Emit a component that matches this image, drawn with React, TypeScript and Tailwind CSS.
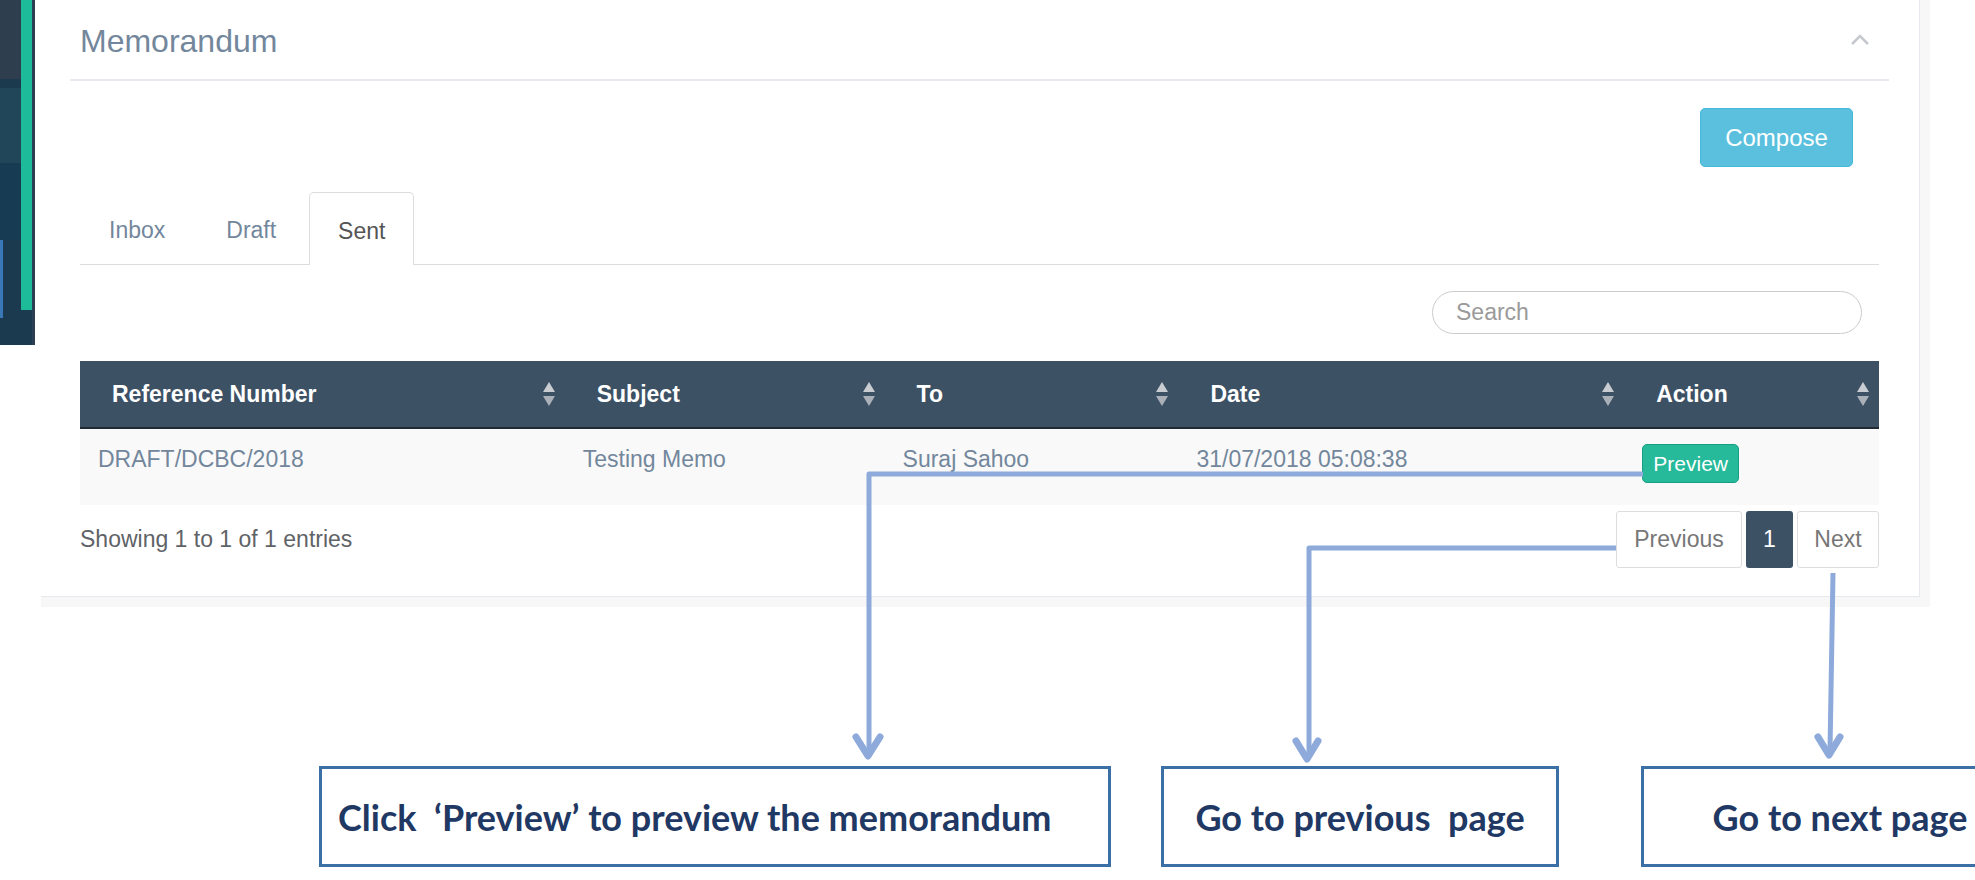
import React from 'react';

const SortIcon: React.FC = () => (
  <svg width="14" height="26" viewBox="0 0 14 26">
    <polygon points="1,11 7,1 13,11" fill="#c9ccd1" />
    <polygon points="1,15 13,15 7,25" fill="#aab0b8" />
  </svg>
);

const columns = [
  { label: 'Reference Number', width: 'w-[485px]' },
  { label: 'Subject', width: 'w-[320px]' },
  { label: 'To', width: 'w-[294px]' },
  { label: 'Date', width: 'w-[446px]' },
  { label: 'Action', width: 'w-[255px]' },
];

const Sidebar: React.FC = () => (
  <div className="flex w-[35px] h-[345px] shrink-0 bg-[#1b3a50]">
    <div className="flex flex-col w-[21px]">
      <div className="h-[79px] bg-[#2f3e4f]" />
      <div className="h-[9px] bg-[#1c3a4e]" />
      <div className="h-[75px] bg-[#214659]" />
      <div className="h-[77px] bg-[#173b53]" />
      <div className="h-[78px] w-[3px] bg-[#3a77b9]" />
    </div>
    <div className="w-[11px] h-[310px] bg-[#1dbb99]" />
    <div className="w-[3px] h-[345px] bg-[#2b3e54]" />
  </div>
);

const App: React.FC = () => {
  return (
    <div className="relative w-[1975px] h-[880px] overflow-hidden bg-white font-['Liberation_Sans',Arial,sans-serif]">
      <div className="flex items-start gap-[6px]">
        <Sidebar />

        {/* page background around the panel */}
        <div className="w-[1889px] h-[607px] shrink-0 bg-[#f7f7f7]">
          <div className="w-[1879px] h-[597px] bg-white border-r border-b border-[#e6e9ed] pl-[29px] pr-[30px]">
            {/* panel header */}
            <div className="flex items-center justify-between h-[81px] pt-[26px] pb-[23px] pl-[10px] pr-[19px] border-b-2 border-[#e6e9ed]">
              <h2 className="text-[32px] leading-[32px] text-[#73879c]">Memorandum</h2>
              <svg width="20" height="12" viewBox="0 0 20 12" className="-mt-[4px]">
                <polyline points="2,11 10,3 18,11" fill="none" stroke="#c5c8cd" strokeWidth="2.5" />
              </svg>
            </div>

            <div className="px-[10px]">
              <div className="flex justify-end pr-[26px] mt-[27px]">
                <button className="w-[153px] h-[59px] rounded-[5px] bg-[#5bc0de] border border-[#46b8da] text-white text-[24px]">
                  Compose
                </button>
              </div>

              {/* tabs */}
              <div className="flex items-end gap-[5px] pl-[1px] mt-[25px] h-[73px] border-b border-[#dddddd]">
                <div className="flex items-center h-[72px] pt-[5px] px-[28px] text-[23px] text-[#73879c]">Inbox</div>
                <div className="flex items-center h-[72px] pt-[5px] px-[28px] text-[23px] text-[#73879c]">Draft</div>
                <div className="flex items-center h-[73px] pt-[5px] px-[28px] text-[23px] text-[#555555] bg-white border border-b-0 border-[#dddddd] rounded-t-[5px] -mb-[1px]">
                  Sent
                </div>
              </div>

              {/* search */}
              <div className="flex justify-end pr-[17px] mt-[26px]">
                <input
                  placeholder="Search"
                  className="w-[430px] h-[43px] rounded-full border border-[#cccccc] pl-[23px] text-[23px] text-[#555] placeholder:text-[#9a9a9a] outline-none"
                />
              </div>

              {/* table */}
              <div className="mt-[27px]">
                <div className="flex h-[68px] bg-[#3d5165] border-b-2 border-[#1f2b36]">
                  {columns.map(c => (
                    <div key={c.label} className={`${c.width} flex items-center justify-between pl-[32px] pr-[9px]`}>
                      <span className="text-[23px] font-bold text-white">{c.label}</span>
                      <SortIcon />
                    </div>
                  ))}
                </div>
                <div className="flex h-[76px] bg-[#f9f9f9] text-[23px] leading-[33px] text-[#73879c]">
                  <div className="w-[485px] pl-[18px] pt-[14px]">DRAFT/DCBC/2018</div>
                  <div className="w-[320px] pl-[18px] pt-[14px]">Testing Memo</div>
                  <div className="w-[294px] pl-[18px] pt-[14px]">Suraj Sahoo</div>
                  <div className="w-[446px] pl-[18px] pt-[14px]">31/07/2018 05:08:38</div>
                  <div className="w-[255px] pl-[18px] pt-[15px]">
                    <button className="w-[97px] h-[39px] rounded-[5px] bg-[#26b99a] border border-[#169f85] text-white text-[21px] leading-none">
                      Preview
                    </button>
                  </div>
                </div>
              </div>

              {/* footer */}
              <div className="flex items-center justify-between mt-[6px]">
                <div className="text-[23px] text-[#5f6367]">Showing 1 to 1 of 1 entries</div>
                <div className="flex gap-[4px] text-[23px]">
                  <div className="flex items-center justify-center w-[126px] h-[57px] border border-[#dddddd] rounded-[3px] text-[#777777]">Previous</div>
                  <div className="flex items-center justify-center w-[47px] h-[57px] rounded-[3px] bg-[#3d5165] text-white">1</div>
                  <div className="flex items-center justify-center w-[82px] h-[57px] border border-[#dddddd] rounded-[3px] text-[#777777]">Next</div>
                </div>
              </div>
            </div>
          </div>
        </div>
      </div>

      {/* callouts */}
      <div className="flex mt-[159px] font-['Lato','Open_Sans',sans-serif] font-bold text-[36px] text-[#1f3864]">
        <div className="ml-[319px] w-[792px] h-[101px] shrink-0 flex items-center pl-[16px] border-[3px] border-[#3a70a6]">
          Click&nbsp; ‘Preview’ to preview the memorandum
        </div>
        <div className="ml-[50px] w-[398px] h-[101px] shrink-0 flex items-center justify-center border-[3px] border-[#3a70a6]">
          Go to previous&nbsp; page
        </div>
        <div className="ml-[82px] w-[398px] h-[101px] shrink-0 flex items-center justify-center border-[3px] border-[#3a70a6]">
          Go to next page
        </div>
      </div>

      {/* connector arrows drawn over the screenshot */}
      <svg className="absolute inset-0 pointer-events-none" width="1975" height="880" viewBox="0 0 1975 880">
        <g fill="none" stroke="#8eaadb" strokeWidth="5" strokeLinejoin="round">
          <path d="M1643 474 H869 V752" />
          <path d="M1616 548 H1309 V754" />
          <path d="M1833 573 L1830 750" />
        </g>
        <g fill="none" stroke="#8eaadb" strokeWidth="7" strokeLinecap="round" strokeLinejoin="round">
          <polyline points="856,737 868,756 880,737" />
          <polyline points="1296,741 1307,759 1318,741" />
          <polyline points="1818,737 1829,755 1840,737" />
        </g>
      </svg>
    </div>
  );
};

export default App;
